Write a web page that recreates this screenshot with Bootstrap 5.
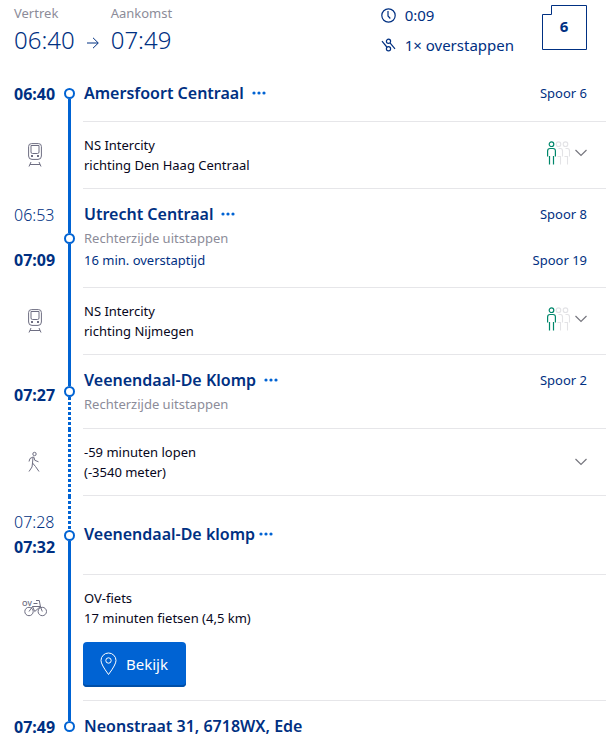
<!DOCTYPE html>
<html lang="nl">
<head>
<meta charset="utf-8">
<meta name="viewport" content="width=device-width, initial-scale=1">
<title>Reisadvies</title>
<link href="https://cdn.jsdelivr.net/npm/bootstrap@5.3.0/dist/css/bootstrap.min.css" rel="stylesheet">
<style>
:root { --navy:#003082; --blue:#0063d3; --soft:#8c8c99; --icon:#6e6e82; --rule:#e6e6e9; }
body { font-family:"Noto Sans","Open Sans",sans-serif; font-size:13px; line-height:20px; color:#070721; background:#fff; }
svg { display:block; fill:none; flex:none; }
.navy { color:var(--navy); }
.soft { color:var(--soft); }
.trip-head { padding:3px 19px 8px 14px; }
.big-time { font-size:24px; line-height:34px; font-weight:300; }
.head-arrow { margin:34px 12px 0 12px; }
.facts { font-size:15px; line-height:30px; margin:-3px 28px 0 0; }
.facts svg { margin-right:9px; }
.platform-card { margin-top:2px; }
.leg { display:grid; grid-template-columns:62px 15px minmax(0,1fr); }
.times { padding:14px 0 16px 14px; font-size:16px; line-height:24px; }
.times .plan { font-weight:300; }
.times-low { padding-top:22px; }
.rail-line { width:3px; background:var(--blue); }
.rail-dash { background:repeating-linear-gradient(var(--blue) 0 3px,#fff 3px 5px); }
.rail-dot { width:11px; height:11px; border:2px solid var(--blue); border-radius:50%; flex:none; }
.h20 { height:20px; } .h31 { height:31px; } .h34 { height:34px; } .h44 { height:44px; }
.body-cell { margin-left:6px; padding:13px 19px 13px 1px; border-bottom:1px solid var(--rule); }
.body-first { padding-bottom:16px; }
.body-tight { padding-bottom:12px; }
.body-tall { padding-top:26px; padding-bottom:28px; }
.stop-name { font-size:16px; line-height:24px; font-weight:600; color:var(--navy); margin:0; }
.note { line-height:24px; }
.crowding { height:36px; }
.mode { padding:21px 0 0 28px; color:var(--icon); }
.mode-bike { padding-left:22px; }
.bare { border:0; background:none; padding:0; }
.btn-view { background:var(--blue); color:#fff; font-size:15px; line-height:20px; height:45px; padding:0 18px 2px 17px; margin:14px 0 0 -1px; border:0; border-radius:4px; box-shadow:inset 0 -2px 0 #004fa8; }
.btn-view:hover { background:#0058bb; color:#fff; }
</style>
</head>
<body>
<svg width="0" height="0" class="position-absolute" aria-hidden="true">
  <defs>
    <symbol id="train" viewBox="0 0 14 24"><g fill="none" stroke="currentColor"><path d="M3.5.6h7Q13.400.6 13.400 3.500v9.500q0 3.400-3.400 3.400H4Q.6 16.400.6 13V3.500Q.6.6 3.500.6z"/><path d="M3 2.500h8v6.500q0 1.500-1.500 1.500h-5Q3 10.500 3 9z"/><path d="M3 19l-2 4.500M11 19l2 4.500M2 21.500h10"/></g><path d="M3 12h2v2H3zM9 12h2v2H9z" fill="currentColor"/></symbol>
    <symbol id="chev" viewBox="0 0 12 8"><path d="M.5 1 6 6.500 11.500 1" fill="none" stroke="#77777f" stroke-width="1.200"/></symbol>
    <symbol id="dots" viewBox="0 0 14 4"><g fill="#0063d3"><circle cx="2" cy="2" r="1.600"/><circle cx="7" cy="2" r="1.600"/><circle cx="12" cy="2" r="1.600"/></g></symbol>
    <symbol id="crowd" viewBox="0 0 24 24"><g fill="none" stroke="#e3e3e6" stroke-width="1.100"><circle cx="11.500" cy="3.200" r="2.300"/><circle cx="18.500" cy="3.200" r="2.300"/><path d="M11.500 7.500h2q2 0 2 2.500v5.500M13.500 15v8.500M10.500 15.500h3M18.500 7.500h2q2 0 2 2.500v5.500M20.500 15v8.500M17.500 15.500h3"/></g><g fill="none" stroke="#00876b" stroke-width="1.200"><circle cx="4.500" cy="3.200" r="2.300"/><path d="M.6 15.500V10Q.6 7.500 3 7.500h3Q8.400 7.500 8.400 10v5.500M2.500 15v8.500M6.500 15v8.500"/></g></symbol>
  </defs>
</svg>

<header class="trip-head d-flex align-items-start navy">
  <div><div class="soft">Vertrek</div><div class="big-time">06:40</div></div>
  <svg class="head-arrow" width="12" height="12" viewBox="0 0 12 12" stroke="currentColor" aria-hidden="true"><path d="M0 6h11M6 .8 11.300 6 6 11.200"/></svg>
  <div><div class="soft">Aankomst</div><div class="big-time">07:49</div></div>
  <div class="facts ms-auto">
    <div class="d-flex align-items-center"><svg width="15" height="15" viewBox="0 0 15 15" stroke="currentColor" stroke-width="1.200" aria-hidden="true"><circle cx="7.500" cy="7.500" r="6.700"/><path d="M7 3v5l2.300 2.500"/></svg>0:09</div>
    <div class="d-flex align-items-center"><svg width="15" height="14" viewBox="0 0 15 14" stroke="currentColor" stroke-width="1.200" aria-hidden="true"><circle cx="7.500" cy="3.300" r="2.100"/><circle cx="7.500" cy="10.700" r="2.100"/><path d="M1 3.200 5.800 9M9 4.800 14 10.800"/></svg>1× overstappen</div>
  </div>
  <svg class="platform-card" width="45" height="45" viewBox="0 0 45 45" role="img" aria-label="Spoor 6"><path d="M9.500.5h35v44H.5v-35h9z" stroke="#003082"/><text x="22" y="27" text-anchor="middle" font-size="15" font-weight="700" fill="#003082">6</text></svg>
</header>

<main>
  <section class="leg">
    <div class="times navy"><div class="fw-bold">06:40</div></div>
    <div class="d-flex flex-column align-items-center"><div class="h20 flex-shrink-0"></div><div class="rail-dot"></div><div class="rail-line flex-grow-1"></div></div>
    <div class="body-cell body-first d-flex justify-content-between align-items-center">
      <div class="d-flex align-items-center gap-2"><h2 class="stop-name">Amersfoort Centraal</h2><button class="bare" aria-label="Meer over Amersfoort Centraal"><svg width="14" height="4"><use href="#dots"/></svg></button></div>
      <span class="navy">Spoor 6</span>
    </div>
  </section>

  <section class="leg">
    <div class="mode"><svg width="14" height="24" role="img" aria-label="Trein"><use href="#train"/></svg></div>
    <div class="d-flex justify-content-center"><div class="rail-line"></div></div>
    <div class="body-cell d-flex justify-content-between">
      <div>NS Intercity<br>richting Den Haag Centraal</div>
      <div class="crowding d-flex align-items-center"><svg width="24" height="24" role="img" aria-label="Rustig" class="me-1"><use href="#crowd"/></svg><button class="bare" aria-label="Toon details"><svg width="12" height="8"><use href="#chev"/></svg></button></div>
    </div>
  </section>

  <section class="leg">
    <div class="times navy d-flex flex-column justify-content-between"><div class="plan">06:53</div><div class="fw-bold">07:09</div></div>
    <div class="d-flex flex-column align-items-center"><div class="rail-line h44"></div><div class="rail-dot"></div><div class="rail-line flex-grow-1"></div></div>
    <div class="body-cell">
      <div class="d-flex justify-content-between align-items-center"><div class="d-flex align-items-center gap-2"><h2 class="stop-name">Utrecht Centraal</h2><button class="bare" aria-label="Meer over Utrecht Centraal"><svg width="14" height="4"><use href="#dots"/></svg></button></div><span class="navy">Spoor 8</span></div>
      <div class="note soft">Rechterzijde uitstappen</div>
      <div class="d-flex justify-content-between navy pb-1"><span>16 min. overstaptijd</span><span>Spoor 19</span></div>
    </div>
  </section>

  <section class="leg">
    <div class="mode"><svg width="14" height="24" role="img" aria-label="Trein"><use href="#train"/></svg></div>
    <div class="d-flex justify-content-center"><div class="rail-line"></div></div>
    <div class="body-cell d-flex justify-content-between">
      <div>NS Intercity<br>richting Nijmegen</div>
      <div class="crowding d-flex align-items-center"><svg width="24" height="24" role="img" aria-label="Rustig" class="me-1"><use href="#crowd"/></svg><button class="bare" aria-label="Toon details"><svg width="12" height="8"><use href="#chev"/></svg></button></div>
    </div>
  </section>

  <section class="leg">
    <div class="times times-low navy d-flex flex-column justify-content-center"><div class="fw-bold">07:27</div></div>
    <div class="d-flex flex-column align-items-center"><div class="rail-line h31"></div><div class="rail-dot"></div><div class="rail-line rail-dash flex-grow-1"></div></div>
    <div class="body-cell body-tight">
      <div class="d-flex justify-content-between align-items-center"><div class="d-flex align-items-center gap-2"><h2 class="stop-name">Veenendaal-De Klomp</h2><button class="bare" aria-label="Meer over Veenendaal-De Klomp"><svg width="14" height="4"><use href="#dots"/></svg></button></div><span class="navy">Spoor 2</span></div>
      <div class="note soft">Rechterzijde uitstappen</div>
    </div>
  </section>

  <section class="leg">
    <div class="mode"><svg width="12" height="24" viewBox="0 0 12 24" stroke="currentColor" role="img" aria-label="Lopen"><circle cx="6.500" cy="4" r="1.700"/><path d="M1 11.500 2 8.500 5 7l1 .3.800 3 3.700 1.500M5 7.500 4.500 13l3 3.500 3.500 5M4.500 13l-.5 4-3 4.500"/></svg></div>
    <div class="d-flex justify-content-center"><div class="rail-line rail-dash"></div></div>
    <div class="body-cell d-flex justify-content-between">
      <div>-59 minuten lopen<br>(-3540 meter)</div>
      <button class="bare" aria-label="Toon details"><svg width="12" height="8"><use href="#chev"/></svg></button>
    </div>
  </section>

  <section class="leg">
    <div class="times navy d-flex flex-column justify-content-between"><div class="plan">07:28</div><div class="fw-bold">07:32</div></div>
    <div class="d-flex flex-column align-items-center"><div class="rail-line rail-dash h34"></div><div class="rail-dot"></div><div class="rail-line flex-grow-1"></div></div>
    <div class="body-cell body-tall d-flex align-items-center gap-1"><h2 class="stop-name">Veenendaal-De klomp</h2><button class="bare" aria-label="Meer over Veenendaal-De klomp"><svg width="14" height="4"><use href="#dots"/></svg></button></div>
  </section>

  <section class="leg">
    <div class="mode mode-bike"><svg width="26" height="24" viewBox="0 0 26 24" stroke="currentColor" role="img" aria-label="OV-fiets"><circle cx="7" cy="15.500" r="4.200"/><circle cx="20.300" cy="15.500" r="4.200"/><path d="M14 4.500h3.300l1.200 6.500 1.800 4.500M10.500 10.500h8M7 15.500l3.500-5 2.200 5 5.800-5M11.500 7.500h4"/><text x="0" y="10" font-size="7" font-weight="600" fill="currentColor" stroke="none">OV</text></svg></div>
    <div class="d-flex justify-content-center"><div class="rail-line"></div></div>
    <div class="body-cell">
      <div>OV-fiets<br>17 minuten fietsen (4,5 km)</div>
      <button class="btn btn-view d-inline-flex align-items-center"><svg class="me-2" width="18" height="24" viewBox="0 0 18 24" stroke="#fff" aria-hidden="true"><path d="M8.500 22.500Q1 12.500 1 8.500a7.500 7.500 0 0 1 15 0q0 4-7.500 14z"/><circle cx="8.500" cy="8.500" r="2.700"/></svg>Bekijk</button>
    </div>
  </section>

  <section class="leg">
    <div class="times navy pb-0"><div class="fw-bold">07:49</div></div>
    <div class="d-flex flex-column align-items-center"><div class="rail-line h20"></div><div class="rail-dot"></div></div>
    <div class="body-cell border-0 pb-1"><h2 class="stop-name">Neonstraat 31, 6718WX, Ede</h2></div>
  </section>
</main>
<script src="https://cdn.jsdelivr.net/npm/bootstrap@5.3.0/dist/js/bootstrap.bundle.min.js"></script>
</body>
</html>
